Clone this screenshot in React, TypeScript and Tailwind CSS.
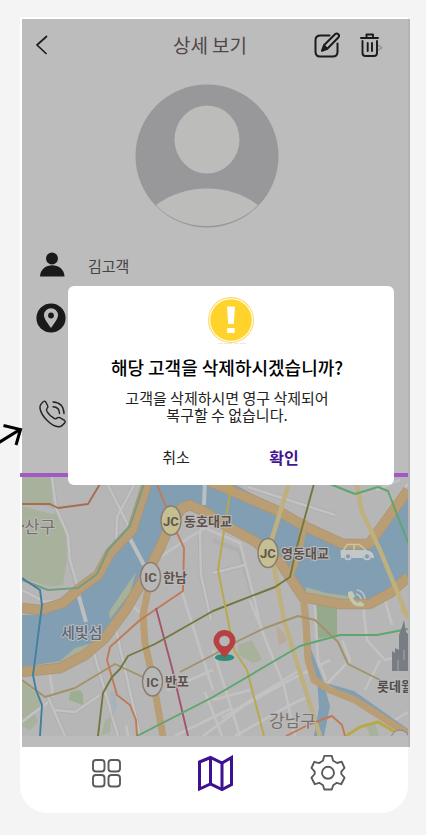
import React from "react";

const FONT = "font-['Noto_Sans_CJK_KR','Noto_Sans',sans-serif]";

function BackIcon() {
  return (
    <svg width="12" height="20" viewBox="0 0 12 20" fill="none" stroke="#1c1c1c" strokeWidth="1.7" strokeLinecap="round" strokeLinejoin="round">
      <path d="M10.500 1.500 1 10l9 8.500" />
    </svg>
  );
}

function EditIcon() {
  return (
    <svg width="26" height="26" viewBox="0 0 26 26" fill="none" stroke="#1b1b1b" strokeWidth="2" strokeLinecap="round" strokeLinejoin="round">
      <path d="M15.500 3.500H6.500Q1.500 3.500 1.500 8V19.500Q1.500 24.500 6 24.500H18.500Q23.500 24.500 23.500 20V11.500" />
      <path d="M8 18.800 10 13.300 21 2.200Q22.800.800 24.300 2.200T24.300 5.500L13.300 16.700Z" />
      <path d="m10 13.500 3 3M8.500 18l3-3" />
    </svg>
  );
}

function TrashIcon() {
  return (
    <svg width="24" height="26" viewBox="0 0 24 26" fill="none" stroke="#1b1b1b" strokeWidth="1.900" strokeLinecap="round" strokeLinejoin="round">
      <path d="m17.500 13 4.500 2.700-4.500 2.700" stroke="#8f8f8f" strokeWidth="1.200" />
      <path d="M1 6h17M6.500 5.500V2.500h6.500v3M2.500 9V21Q2.500 24 5.500 24H14Q17 24 17 21V9" />
      <path d="M7.700 11v8M12 11v8" />
    </svg>
  );
}

function Avatar() {
  return (
    <svg width="144" height="144" viewBox="0 0 144 144" role="img" aria-label="프로필">
      <circle cx="72" cy="72" r="71.500" fill="#98989a" />
      <ellipse cx="72" cy="55.500" rx="32.500" ry="34" fill="#bcbcba" />
      <path d="M21 121C50 99 94 99 123 121 96 149 47 149 21 121Z" fill="#bcbcba" />
    </svg>
  );
}

function PersonIcon() {
  return (
    <svg width="30" height="30" viewBox="0 0 30 30" fill="#1a1a1a">
      <circle cx="16" cy="8.500" r="6" />
      <path d="M4 26.500C4.500 11.500 28 11.500 28.500 26.500Z" />
    </svg>
  );
}

function PlaceIcon() {
  return (
    <svg width="30" height="30" viewBox="0 0 30 30">
      <circle cx="15" cy="15" r="14.600" fill="#1a1a1a" />
      <path d="M15 25C11 19 8 15.500 8 12.200A7 7 0 0 1 22 12.200C22 15.500 19 19 15 25Z" fill="#bcbcbc" />
      <circle cx="15" cy="12.500" r="2.900" fill="#1a1a1a" />
    </svg>
  );
}

function CallIcon() {
  return (
    <svg width="30" height="30" viewBox="0 0 30 30" fill="none" stroke="#222" strokeWidth="1.400" strokeLinecap="round" strokeLinejoin="round">
      <path d="M7.500 2.500 9.700 6.800Q10.300 8.500 9 9.500 8 10.500 9 12.500 11.500 17 17 19.800 18.300 20 19.300 18.800 20.500 18 21.800 18.700L26.500 21.300Q27.700 22.200 26.800 23.800 23.500 28 20.500 27.700C13.500 27.500 3.500 17.500 2 9.500Q1.500 5.500 5.500 2.500 6.700 1.800 7.500 2.500Z" />
      <path d="M15 3Q25.500 3.500 26 14.500M15 7.700Q21.500 8 21.500 14.500" />
    </svg>
  );
}

function WarningIcon() {
  return (
    <svg width="48" height="48" viewBox="0 0 48 48" role="img" aria-label="경고">
      <circle cx="24" cy="24" r="22.400" fill="none" stroke="#fbdc62" strokeWidth="1.100" />
      <circle cx="24" cy="24" r="20.800" fill="#ffd32c" />
      <path d="M20 10.500h8l-1.200 17.500h-5.600Z M20.200 32h7.500v5h-7.500Z" fill="#fff" />
      <path d="M11 48h28" stroke="#d2d2cc" strokeWidth="1" strokeDasharray="5 1 8 2" />
    </svg>
  );
}

function GridIcon() {
  return (
    <svg width="36" height="36" viewBox="0 0 36 36" fill="none" stroke="#5b5b5b" strokeWidth="1.900">
      <rect x="5" y="5" width="11.500" height="11.500" rx="3" />
      <rect x="20.500" y="5" width="11.500" height="11.500" rx="3" />
      <rect x="5" y="20" width="11.500" height="11.500" rx="3" />
      <rect x="20.500" y="20" width="11.500" height="11.500" rx="3" />
    </svg>
  );
}

function MapIcon() {
  return (
    <svg width="38" height="38" viewBox="0 0 38 38" fill="none" stroke="#3d1190" strokeWidth="3">
      <path d="M1.500 7 12.500 2.500 24 8 33.500 2.500V29.500L24 34.500 12.500 29 1.500 34Z" />
      <path d="M12.500 2.500v26.500M24 8v26.500" />
    </svg>
  );
}

function GearIcon() {
  return (
    <svg width="38" height="38" viewBox="0 0 38 38" fill="none" stroke="#5b5b5b" strokeWidth="1.900" strokeLinejoin="round">
      <path d="M14.300 0.900h7.500l1.300 4.800 4 2.300 4.600-1.300L34.500 13 31.300 16.700v2.300L34.500 22.700 31.200 29.200 26.700 27.800 23.200 30.200 21.800 34.500h-7.500l-1.300-4.300L9.300 27.800 4.800 29.200 1.500 22.700 4.700 19v-2.300L1.500 13 4.300 6.800l4.600 1.300 4-2.300Z" />
      <circle cx="18" cy="17.800" r="6" />
    </svg>
  );
}

type Label = { x: number; y: number; text: string; size: number; color?: string; weight?: number };
const LABELS: Label[] = [
  { x: 24, y: 533, text: "산구", size: 17, color: "#77716c" },
  { x: 184, y: 526, text: "동호대교", size: 13, weight: 700 },
  { x: 281, y: 558, text: "영동대교", size: 13, weight: 700 },
  { x: 163, y: 582, text: "한남", size: 13, weight: 700 },
  { x: 61, y: 638, text: "세빛섬", size: 15, color: "#5a697c", weight: 500 },
  { x: 165, y: 686, text: "반포", size: 13, weight: 700 },
  { x: 269, y: 727, text: "강남구", size: 17, color: "#77716c" },
  { x: 377, y: 691, text: "롯데월", size: 13, color: "#514d4d", weight: 700 },
];

type Junction = { x: number; y: number; text: string; fill: string };
const JUNCTIONS: Junction[] = [
  { x: 171, y: 520.5, text: "JC", fill: "#c5bf91" },
  { x: 268, y: 553, text: "JC", fill: "#c5bf91" },
  { x: 150.5, y: 577, text: "IC", fill: "#b9b8b9" },
  { x: 152.5, y: 681.5, text: "IC", fill: "#b9b8b9" },
];

function CityMap() {
  return (
    <svg className="block w-full" viewBox="22 477 386 259" role="img" aria-label="지도">
      <rect x="22" y="477" width="386" height="259" fill="#b7b6b6" />
      {/* parks */}
      <g fill="#a8b19c">
        <path d="M22 477H53L52 502 59 510 66 535 67 560 63 585 50 587 22 578Z" />
        <path d="M22 682 40 696 43 705 34 712 38 722 30 730 22 726Z" />
        <path d="m70 692 10-2 3 4v11l-14-5Z" fill="#9caf90" />
        <path d="M316 604h21v31l-20 4Z" fill="#97a98c" />
        <path d="m238 645 14-5 10 20-9 3-14-8Z" />
        <path d="m105 720 6-3-1 15-9 4Z" />
        <path d="m366 725 9-2 4 13h-9Z" />
      </g>
      <path d="m276 625 8 8 3 8-8 4Z" fill="#b9aa9a" />
      <path d="m22 505 26 .500 9 5-4 4L22 506Z" fill="#b7b6b6" />
      {/* minor streets */}
      <g fill="none" stroke="#afafaf" strokeWidth="4.500" strokeLinejoin="round">
        <path d="M52 477 56 508 68 535 70 560 85 620M108 485 148 565M134 485 117 517 116 550M205 485 203 515 200 535 201 575 211 620M213 540 240 551 262 630M213 573 245 565" />
        <path d="M248 487 335 515M48 697 54 710 75 712 100 695M48 697 65 736M93 650 118 736M115 625 140 736M22 590 45 602" />
      </g>
      <g fill="none" stroke="#c2c2c2" strokeWidth="2.600" strokeLinejoin="round">
        <path d="M52 477 56 508 68 535 70 560 78 588 85 620M108 485 148 565M134 485 117 517 116 550M205 485 203 515 200 535 201 575 211 620M156 560 190 537 205 528 240 543 262 630M213 573 245 565" />
        <path d="M248 487 335 515M48 697 54 710 75 712 100 695M48 697 65 736M50 675 53 697M93 650 118 736M115 625 140 736M22 590 45 602 80 598M22 722 48 702" />
        <path d="M125 600 143 615M167 690 213 670M182 592 213 690M213 650 240 736M203 736 245 705 290 680 330 660M222 718 300 670M235 736 290 705 305 698M213 700 250 690M250 600 284 686 295 736M315 605 318 660 326 680M326 685 350 660 342 640M363 605 367 640 385 660 407 655M385 600 392 625M376 490 400 480M395 500 408 484M205 692 222 736M330 690 395 720 408 712M380 660 365 690M126 725 128 736M175 736 230 709" />
      </g>
      {/* river */}
      <path d="M149 477H222L280 510 306 527 343 545 367 545 386 525 408 494V578L390 590 371 600 340 602 310 593 300 589 280 560 258 543 230 526 206 510 185 505 169 524 156 548 142 576 122 611 103 635 80 652 57 663 22 671V615L45 614 70 603 96 579 111 553 132 528Z" fill="#829eb3" />
      <path d="M109 612 136 572 130 593 110 619M22 667 60 661 75 648 92 643 70 660 42 670ZM306 587l20 6 30 4-15 6-36-8Z" fill="#a7b19a" />
      <path d="m317 680 9 12 4 14-6 30h-10l5-28ZM326 683l28 8 54 38v7L355 702ZM308 605l3 44 13 34-7-1-12-30Z" fill="#829eb3" />
      <path d="m110 690 6 3 1 15-5 8Z" fill="#a8b2b9" />
      <path d="M128 535 144 565M77 590 86 622M205 480 204 505" fill="none" stroke="#bcbfc1" strokeWidth="4" />
      {/* highways */}
      <path d="M22 608 40 610 63 603 80 588 98 575 110 553 132 530 149 477M22 672 60 668 85 655 105 638 125 611 145 577 160 548 170 525 182 508 190 505 205 512 230 528 256 542 280 562 303 597 340 604 370 604 390 593 408 577M210 482 223 487 280 512 306 527 343 544 369 544 385 522 408 490" fill="none" stroke="#a99577" strokeWidth="10.500" strokeLinejoin="round" />
      <g fill="none" stroke="#b99d74" strokeWidth="9" strokeLinejoin="round">
        <path d="M22 608 40 610 63 603 80 588 98 575 110 553 132 530 149 477M22 672 60 668 85 655 105 638 125 611 145 577 160 548 170 525 182 508 190 505 205 512 230 528 256 542 280 562 303 597 340 604 370 604 390 593 408 577" />
        <path d="M210 482 223 487 280 512 306 527 343 544 369 544 385 522 408 490" />
        <path d="M150 580 143 615 145 643 153 680 163 736" strokeWidth="7" />
        <path d="M305 520 298 555 290 575M303 595 306 625 308 660 314 680 330 690 355 700 408 734" strokeWidth="7" />
      </g>
      <g fill="none" stroke="#beb07f" strokeWidth="4.500" strokeLinejoin="round">
        <path d="M290 480 270 545 284 620 293 650 320 736M356 480 362 512 380 550 408 618M402 608 408 618" />
      </g>
      {/* metro lines */}
      <g fill="none" strokeWidth="1.900" strokeLinejoin="round">
        <path d="M22 680 45 697 75 688 115 664 145 678M180 672 213 655 240 640 265 628 298 616 315 620 338 642 348 664 380 680" stroke="#a2926a" />
        <path d="M22 504H50L58 508 88 504 100 484" stroke="#a66e4e" />
        <path d="M155 480 177 533 184 548 183 591 140 620 110 647 107 660 117 695 130 705 136 720 137 736" stroke="#c27a56" />
        <path d="M156 608 172 668 188 736" stroke="#a3556a" />
        <path d="M98 736 103 693 112 677 120 669 128 656 155 644 213 611 275 587 290 577 296 550 315 480" stroke="#74783f" />
        <path d="M232 480 218 570 228 620 234 650 247 670 264 736" stroke="#b9a849" />
        <path d="M137 736 213 697 300 646 340 635 377 635 408 629M330 484 355 494 378 487 388 491 408 543" stroke="#5fa66e" />
        <path d="M22 580 48 590 78 588 97 574 108 550 130 526 144 484" stroke="#749d82" />
        <path d="M22 578 40 590 42 605 33 675 36 690 42 705 40 736" stroke="#437f9f" />
        <path d="M286 736 310 724 332 716 342 725 345 736" stroke="#c27a56" />
        <path d="M346 736 360 727 378 722 395 732" stroke="#b9a849" strokeWidth="3" />
      </g>
      {/* castle */}
      <path d="M392 671V651l3 2v-5l4 2v-15l3-8 2-7 2 12 2 2v37Z" fill="#777d83" />
      <path d="M398 660v11M404 650v10" stroke="#969ba0" strokeWidth="1.500" />
      <circle cx="400" cy="739" r="9" fill="#b9b8b9" stroke="#8c827a" />
      {JUNCTIONS.map((j) => (
        <g key={j.x}>
          <ellipse cx={j.x} cy={j.y} rx="10" ry="14.500" fill={j.fill} stroke="#8b7c71" strokeWidth="1.400" />
          <text x={j.x} y={j.y + 5} textAnchor="middle" fontSize="13" fontWeight="700" fill="#62574e" className="font-['Roboto','Liberation_Sans',sans-serif]">{j.text}</text>
        </g>
      ))}
      <path d="M22 526h2" stroke="#77716c" strokeWidth="2" />
      {LABELS.map((l) => (
        <text key={l.text} x={l.x} y={l.y} fontSize={l.size} fontWeight={l.weight ?? 400} fill={l.color ?? "#5e514a"} stroke="#bdbcbc" strokeWidth="2" strokeLinejoin="round" paintOrder="stroke">{l.text}</text>
      ))}
      {/* car */}
      <path d="M343 551 347 544.500H359L366 550M354 545v6" fill="none" stroke="#c9c6a2" strokeWidth="1.500" />
      <path d="M340.500 550H366Q374 551 374 558H371A4 4 0 0 0 363 558H352A4 4 0 0 0 344 558H341Z" fill="#c3c7c8" />
      <g fill="#829eb3" stroke="#c3c7c8" strokeWidth="1.700">
        <circle cx="348" cy="556.500" r="3" />
        <circle cx="367" cy="556.500" r="3" />
      </g>
      <path d="M348 592 352 591 355 596 353 598Q354 601 358 603L360 601 364 604V606Q352 609 348 595Z" fill="#c5c8b1" />
      <path d="M357 590Q364 591 365 599M356 594Q360 595 361 599" fill="none" stroke="#bfc3c4" strokeWidth="1.500" />
      {/* marker */}
      <ellipse cx="224.500" cy="657.500" rx="9.800" ry="3.500" fill="#2e8d7c" />
      <path d="M224.500 658C218 650 213.500 645.500 213.500 641A11 11 0 0 1 235.500 641C235.500 645.500 231 650 224.500 658Z" fill="#b74141" />
      <circle cx="224.500" cy="641" r="5.300" fill="#b7b6b6" />
    </svg>
  );
}

function DeleteDialog() {
  return (
    <div role="alertdialog" aria-labelledby="dialog-title" aria-describedby="dialog-text" className="absolute top-[269px] right-[14px] left-12 flex flex-col items-center rounded-md bg-white pt-2.5 pb-3.5 text-black">
      <WarningIcon />
      <div className="flex w-full flex-col items-center pr-2">
        <h2 id="dialog-title" className="mt-[9px] text-[18px] leading-7 font-medium whitespace-nowrap">해당 고객을 삭제하시겠습니까?</h2>
        <p id="dialog-text" className="mt-2 text-center text-[15px] leading-[17px] whitespace-nowrap text-[#222]">
          고객을 삭제하시면 영구 삭제되어
          <br />
          복구할 수 없습니다.
        </p>
      </div>
      <div className="mt-5 flex w-full justify-center gap-12 pr-0.5">
        <button type="button" className="h-7 w-15 text-[15px] leading-7 text-[#222]">취소</button>
        <button type="button" className="h-7 w-15 text-[16px] leading-7 font-bold text-[#421492]">확인</button>
      </div>
    </div>
  );
}

export default function App() {
  return (
    <div className={`relative min-h-screen overflow-hidden bg-[#f4f4f4] pt-[17px] pr-[18px] pb-[22px] pl-5 ${FONT}`}>
      <svg className="absolute top-[422px] left-0 z-10" width="24" height="25" viewBox="0 0 24 25" fill="none" stroke="#000" strokeWidth="3">
        <path d="M-1 20.500 20 7.500M3.500 3.500 20.500 7.500 16 23" />
      </svg>
      <div className="relative rounded-b-[27px] bg-white pt-0.5">
        <main className="-mr-0.5 ml-0.5 border-r-2 border-[#b3b3b3] bg-[#bcbcbc] pb-[11px]">
          <header className="grid h-[52px] grid-cols-[1fr_auto_1fr] items-center pr-6 pl-3.5">
            <button type="button" aria-label="뒤로" className="justify-self-start"><BackIcon /></button>
            <h1 className="text-[19px] leading-7 text-[#50474a]">상세 보기</h1>
            <div className="flex items-center justify-end gap-5">
              <button type="button" aria-label="수정"><EditIcon /></button>
              <button type="button" aria-label="삭제"><TrashIcon /></button>
            </div>
          </header>
          <div className="flex justify-center pt-[13px] pr-4"><Avatar /></div>
          <ul className="flex h-[245px] flex-col pt-[22px] pl-3.5">
            <li className="flex h-[53px] items-start gap-[22px] text-[15px] leading-8 text-[#444]"><PersonIcon />김고객</li>
            <li className="h-24"><PlaceIcon /></li>
            <li className="pl-0.5"><CallIcon /></li>
          </ul>
          <div className="-ml-0.5 h-1 bg-[#a159c5]" />
          <CityMap />
        </main>
        <nav className="flex h-[66px] items-start justify-between pt-2 pr-[60px] pl-[68px]">
          <button type="button" aria-label="메뉴"><GridIcon /></button>
          <button type="button" aria-label="지도"><MapIcon /></button>
          <button type="button" aria-label="설정"><GearIcon /></button>
        </nav>
        <DeleteDialog />
      </div>
    </div>
  );
}
